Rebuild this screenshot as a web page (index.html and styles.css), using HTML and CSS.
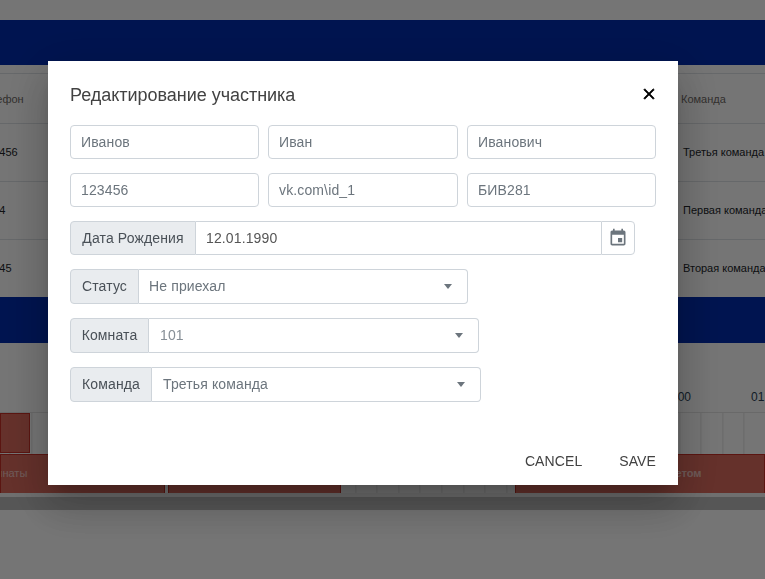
FILE: index.html
```html
<!DOCTYPE html>
<html lang="ru">
<head>
<meta charset="utf-8">
<title>Редактирование участника</title>
<link rel="stylesheet" href="styles.css">
</head>
<body>
<div class="page">
  <div class="nav"></div>
  <div class="table">
    <div class="row row-head"><span class="phone">Телефон</span><span class="team team-head">Команда</span></div>
    <div class="row"><span class="phone phone-1">123456</span><span class="team">Третья команда</span></div>
    <div class="row"><span class="phone phone-2">1234</span><span class="team">Первая команда</span></div>
    <div class="row"><span class="phone phone-3">12345</span><span class="team">Вторая команда</span></div>
  </div>
  <div class="band"></div>
  <div class="times"><span>00:00</span><span>01:00</span></div>
  <div class="track">
    <div class="track-row track-row-top"><div class="block block-a"></div></div>
    <div class="track-row track-row-bottom">
      <div class="block block-b"><span class="block-text-left">Нет комнаты</span></div>
      <div class="block block-c"></div>
      <div class="block block-d"><span class="block-text-right">С ответом</span></div>
    </div>
  </div>
  <div class="scroll-edge"></div>
  <div class="scroll-bar"></div>
</div>

<div class="overlay">
  <div class="modal">
    <div class="modal-head">
      <h2 class="title">Редактирование участника</h2>
      <svg class="close" viewBox="0 0 24 24" aria-label="Закрыть"><path d="M19 6.41L17.59 5 12 10.59 6.41 5 5 6.41 10.59 12 5 17.59 6.41 19 12 13.41 17.59 19 19 17.59 13.41 12z"/></svg>
    </div>
    <div class="form">
      <div class="triple">
        <div class="field">Иванов</div>
        <div class="field">Иван</div>
        <div class="field">Иванович</div>
      </div>
      <div class="triple">
        <div class="field">123456</div>
        <div class="field">vk.com\id_1</div>
        <div class="field">БИВ281</div>
      </div>
      <div class="group group-date">
        <div class="addon addon-date">Дата Рождения</div>
        <div class="control control-date">12.01.1990</div>
        <div class="cal">
          <svg class="cal-icon" viewBox="0 0 24 24"><path d="M17 12h-5v5h5v-5zM16 1v2H8V1H6v2H5c-1.11 0-1.99.9-1.99 2L3 19c0 1.1.89 2 2 2h14c1.1 0 2-.9 2-2V5c0-1.1-.9-2-2-2h-1V1h-2zm3 18H5V8h14v11z"/></svg>
        </div>
      </div>
      <div class="group group-tall group-status">
        <div class="addon addon-status">Статус</div>
        <div class="control control-select">Не приехал<i class="caret"></i></div>
      </div>
      <div class="group group-tall group-room">
        <div class="addon addon-room">Комната</div>
        <div class="control control-select control-room">101<i class="caret"></i></div>
      </div>
      <div class="group group-tall group-team">
        <div class="addon addon-team">Команда</div>
        <div class="control control-select control-team">Третья команда<i class="caret"></i></div>
      </div>
    </div>
    <div class="actions">
      <span class="action">CANCEL</span>
      <span class="action">SAVE</span>
    </div>
  </div>
</div>
</body>
</html>
```

FILE: styles.css
```css
* { box-sizing: border-box; }
html, body { margin: 0; height: 100%; overflow: hidden; }
body { background: #fff; font-family: "Liberation Sans", Arial, sans-serif; }

.page { height: 579px; padding-top: 20px; display: flex; flex-direction: column; overflow: hidden; }
.nav { height: 45px; flex: none; background: #002cae; }

.table { height: 232px; flex: none; padding-top: 8px; overflow: hidden; }
.row { height: 58px; display: flex; justify-content: space-between; align-items: center; padding-bottom: 2px; border-top: 1px solid #dee2e6; font-size: 11px; color: #212529; white-space: nowrap; }
.row-head { height: 50px; padding-bottom: 0; color: #6f6a66; }
.phone { margin-left: -19px; }
.row-head .phone { margin-left: -22px; }
.team { width: 82px; flex: none; }
.team-head { width: 84px; }

.band { height: 46px; flex: none; background: #002cae; }

.times { height: 69px; flex: none; padding: 47px 0 0 661px; display: flex; gap: 60px; font-size: 12px; line-height: 14px; color: #2a3f55; white-space: nowrap; }

.track { height: 81px; flex: none; border-top: 1px solid #e4e4e4; background: repeating-linear-gradient(90deg, #e2e2e2 0 1px, transparent 1px 21.6px) 9.4px 0; }
.track-row { display: flex; }
.track-row-top { height: 41px; }
.track-row-bottom { height: 40px; }
.block { background: #dc6b5e; border: 1px solid #c62f26; height: 100%; }
.block-a { width: 30px; height: 40px; }
.block-b { width: 165px; margin-right: 3px; overflow: hidden; }
.block-c { width: 173px; margin-right: 174px; }
.block-d { flex: 1; overflow: hidden; }
.block-text-left, .block-text-right { display: block; font-size: 11px; line-height: 36px; color: #fff; opacity: .6; white-space: nowrap; }
.block-text-left { margin-left: -39px; }
.block-text-right { padding-left: 130px; font-weight: 700; }

.scroll-edge { height: 4px; flex: none; background: #f1f1f1; }
.scroll-bar { height: 13px; flex: none; background: #bcbcbc; }

.overlay { position: fixed; inset: 0; background: rgba(0, 0, 0, .54); padding: 61px 87px 0 48px; }
.modal { width: 630px; height: 424px; background: #fff; padding: 0 22px; display: flex; flex-direction: column; box-shadow: 0 11px 15px -7px rgba(0,0,0,.2), 0 24px 38px 3px rgba(0,0,0,.14), 0 9px 46px 8px rgba(0,0,0,.12); }

.modal-head { height: 64px; flex: none; display: flex; justify-content: space-between; align-items: center; padding-top: 4px; }
.title { margin: 0; font-size: 18px; font-weight: 400; letter-spacing: -.03px; color: #424242; line-height: 24px; }
.close { width: 18px; height: 18px; margin-right: -1.5px; margin-top: -3px; fill: #000; stroke: #000; stroke-width: .9; }

.form { display: flex; flex-direction: column; gap: 14px; font-size: 14px; line-height: 20px; letter-spacing: .13px; }
.triple { display: grid; grid-template-columns: 189px 190px 189px; column-gap: 9px; width: 586px; }
.field { height: 34px; padding: 6px 10px; border: 1px solid #ced4da; border-radius: 4px; color: #6c757d; background: #fff; }

.group { height: 34px; display: flex; }
.group-tall { height: 35px; }
.group-date { width: 565px; }
.group-status { width: 398px; }
.group-room { width: 409px; }
.group-team { width: 411px; }

.addon { flex: none; display: flex; align-items: center; justify-content: center; background: #e9ecef; color: #495057; border: 1px solid #ced4da; border-radius: 4px 0 0 4px; }
.group-tall .addon, .group-tall .control { padding-bottom: 1px; }
.addon-date { width: 126px; }
.addon-status { width: 69px; }
.addon-room { width: 79px; }
.addon-team { width: 82px; }

.control { flex: 1; position: relative; display: flex; align-items: center; padding-left: 10px; border: 1px solid #ced4da; border-left: 0; border-radius: 0 4px 4px 0; color: #6c757d; }
.control-date { border-radius: 0; border-right: 0; color: #555; }
.control-room { padding-left: 11px; color: #868e96; }
.control-team { padding-left: 11px; }
.caret { position: absolute; right: 15px; top: 14px; border-left: 4.5px solid transparent; border-right: 4.5px solid transparent; border-top: 5px solid #6c757d; }
.cal { width: 34px; flex: none; display: flex; align-items: center; justify-content: center; border: 1px solid #ced4da; border-radius: 0 4px 4px 0; }
.cal-icon { width: 20px; height: 20px; fill: #6c757d; }

.actions { margin-top: auto; height: 48px; flex: none; display: flex; justify-content: flex-end; gap: 37px; font-size: 14px; line-height: 48px; letter-spacing: .1px; color: #424242; }
```
